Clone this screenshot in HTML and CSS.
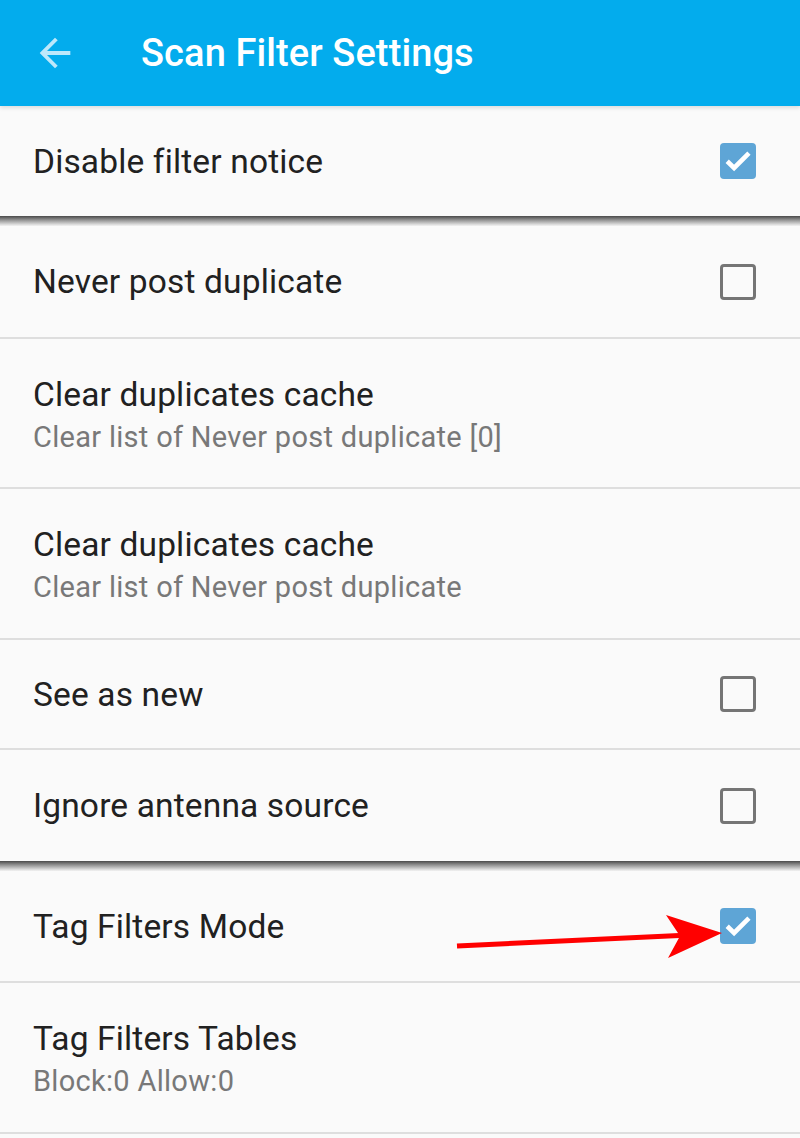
FILE: index.html
```html
<!DOCTYPE html>
<html>
<head>
<meta charset="utf-8">
<link rel="stylesheet" href="styles.css">
</head>
<body>
<div class="screen">
  <header class="appbar">
    <svg class="back" viewBox="0 0 24 24"><path d="M20 11H7.83l5.59-5.59L12 4l-8 8 8 8 1.41-1.41L7.83 13H20v-2z" fill="currentColor"/></svg>
    <h1 class="title">Scan Filter Settings</h1>
  </header>
  <div class="list">
    <div class="row single first"><span class="label">Disable filter notice</span><span class="cb checked"><svg viewBox="0 0 24 24"><path d="M4.8 12.2l4.6 4.4L19.3 6.8" fill="none" stroke="#fff" stroke-width="3.1"/></svg></span></div>
    <div class="sep"></div>
    <div class="row single tall"><span class="label">Never post duplicate</span><span class="cb"></span></div>
    <div class="row double"><div class="texts"><span class="label">Clear duplicates cache</span><span class="sub">Clear list of Never post duplicate [0]</span></div></div>
    <div class="row double big"><div class="texts"><span class="label">Clear duplicates cache</span><span class="sub">Clear list of Never post duplicate</span></div></div>
    <div class="row single short"><span class="label">See as new</span><span class="cb"></span></div>
    <div class="row single tall last"><span class="label">Ignore antenna source</span><span class="cb"></span></div>
    <div class="sep"></div>
    <div class="row single"><span class="label">Tag Filters Mode</span><span class="cb checked"><svg viewBox="0 0 24 24"><path d="M4.8 12.2l4.6 4.4L19.3 6.8" fill="none" stroke="#fff" stroke-width="3.1"/></svg></span></div>
    <div class="row double big"><div class="texts"><span class="label">Tag Filters Tables</span><span class="sub">Block:0 Allow:0</span></div></div>
  </div>
  <svg class="annot" width="800" height="1138" viewBox="0 0 800 1138">
    <line x1="457" y1="946" x2="690" y2="935" stroke="#f00" stroke-width="5"/>
    <polygon points="722,933 666,915 680,936 668,958" fill="#f00"/>
  </svg>
</div>
</body>
</html>
```
FILE: styles.css
```css
html, body { margin: 0; padding: 0; }
body { background: #fafafa; font-family: Roboto, "Noto Sans", sans-serif; }
.screen { position: relative; width: 800px; height: 1138px; overflow: hidden; background: #fafafa; }
.appbar { height: 106px; background: #03aced; display: flex; align-items: center; box-shadow: 0 2px 4px rgba(0,0,0,0.12); position: relative; z-index: 1; }
.back { color: #bde8fb; margin-left: 32px; width: 46px; height: 46px; flex: none; }
.title { margin: 0 0 0 63px; color: #fff; font-size: 38px; font-weight: 500; letter-spacing: 0.1px; }
.list { display: flex; flex-direction: column; }
.row { display: flex; align-items: center; justify-content: space-between; padding: 0 44px 0 33px; border-bottom: 2px solid #dedede; flex: none; }
.row.single { height: 110px; }
.row.tall { height: 111px; }
.row.short { height: 108px; }
.row.double { height: 148px; }
.row.double.big { height: 149px; }
.row.last, .row.first { border-bottom: none; }
.label { font-size: 33.5px; color: #212121; letter-spacing: 0.15px; }
.texts { display: flex; flex-direction: column; gap: 6px; margin-top: 2px; }
.sub { font-size: 29px; color: #787878; letter-spacing: 0.3px; }
.cb { width: 36px; height: 36px; box-sizing: border-box; border: 3px solid #757575; border-radius: 4px; display: flex; }
.cb.checked { background: #5ea5d6; border: none; }
.cb svg { width: 36px; height: 36px; }
.sep { height: 10px; flex: none; background: linear-gradient(#4a4a4a, #8a8a8a 35%, #dcdcdc 85%, #f2f2f2); }
.annot { position: absolute; left: 0; top: 0; pointer-events: none; }
```
